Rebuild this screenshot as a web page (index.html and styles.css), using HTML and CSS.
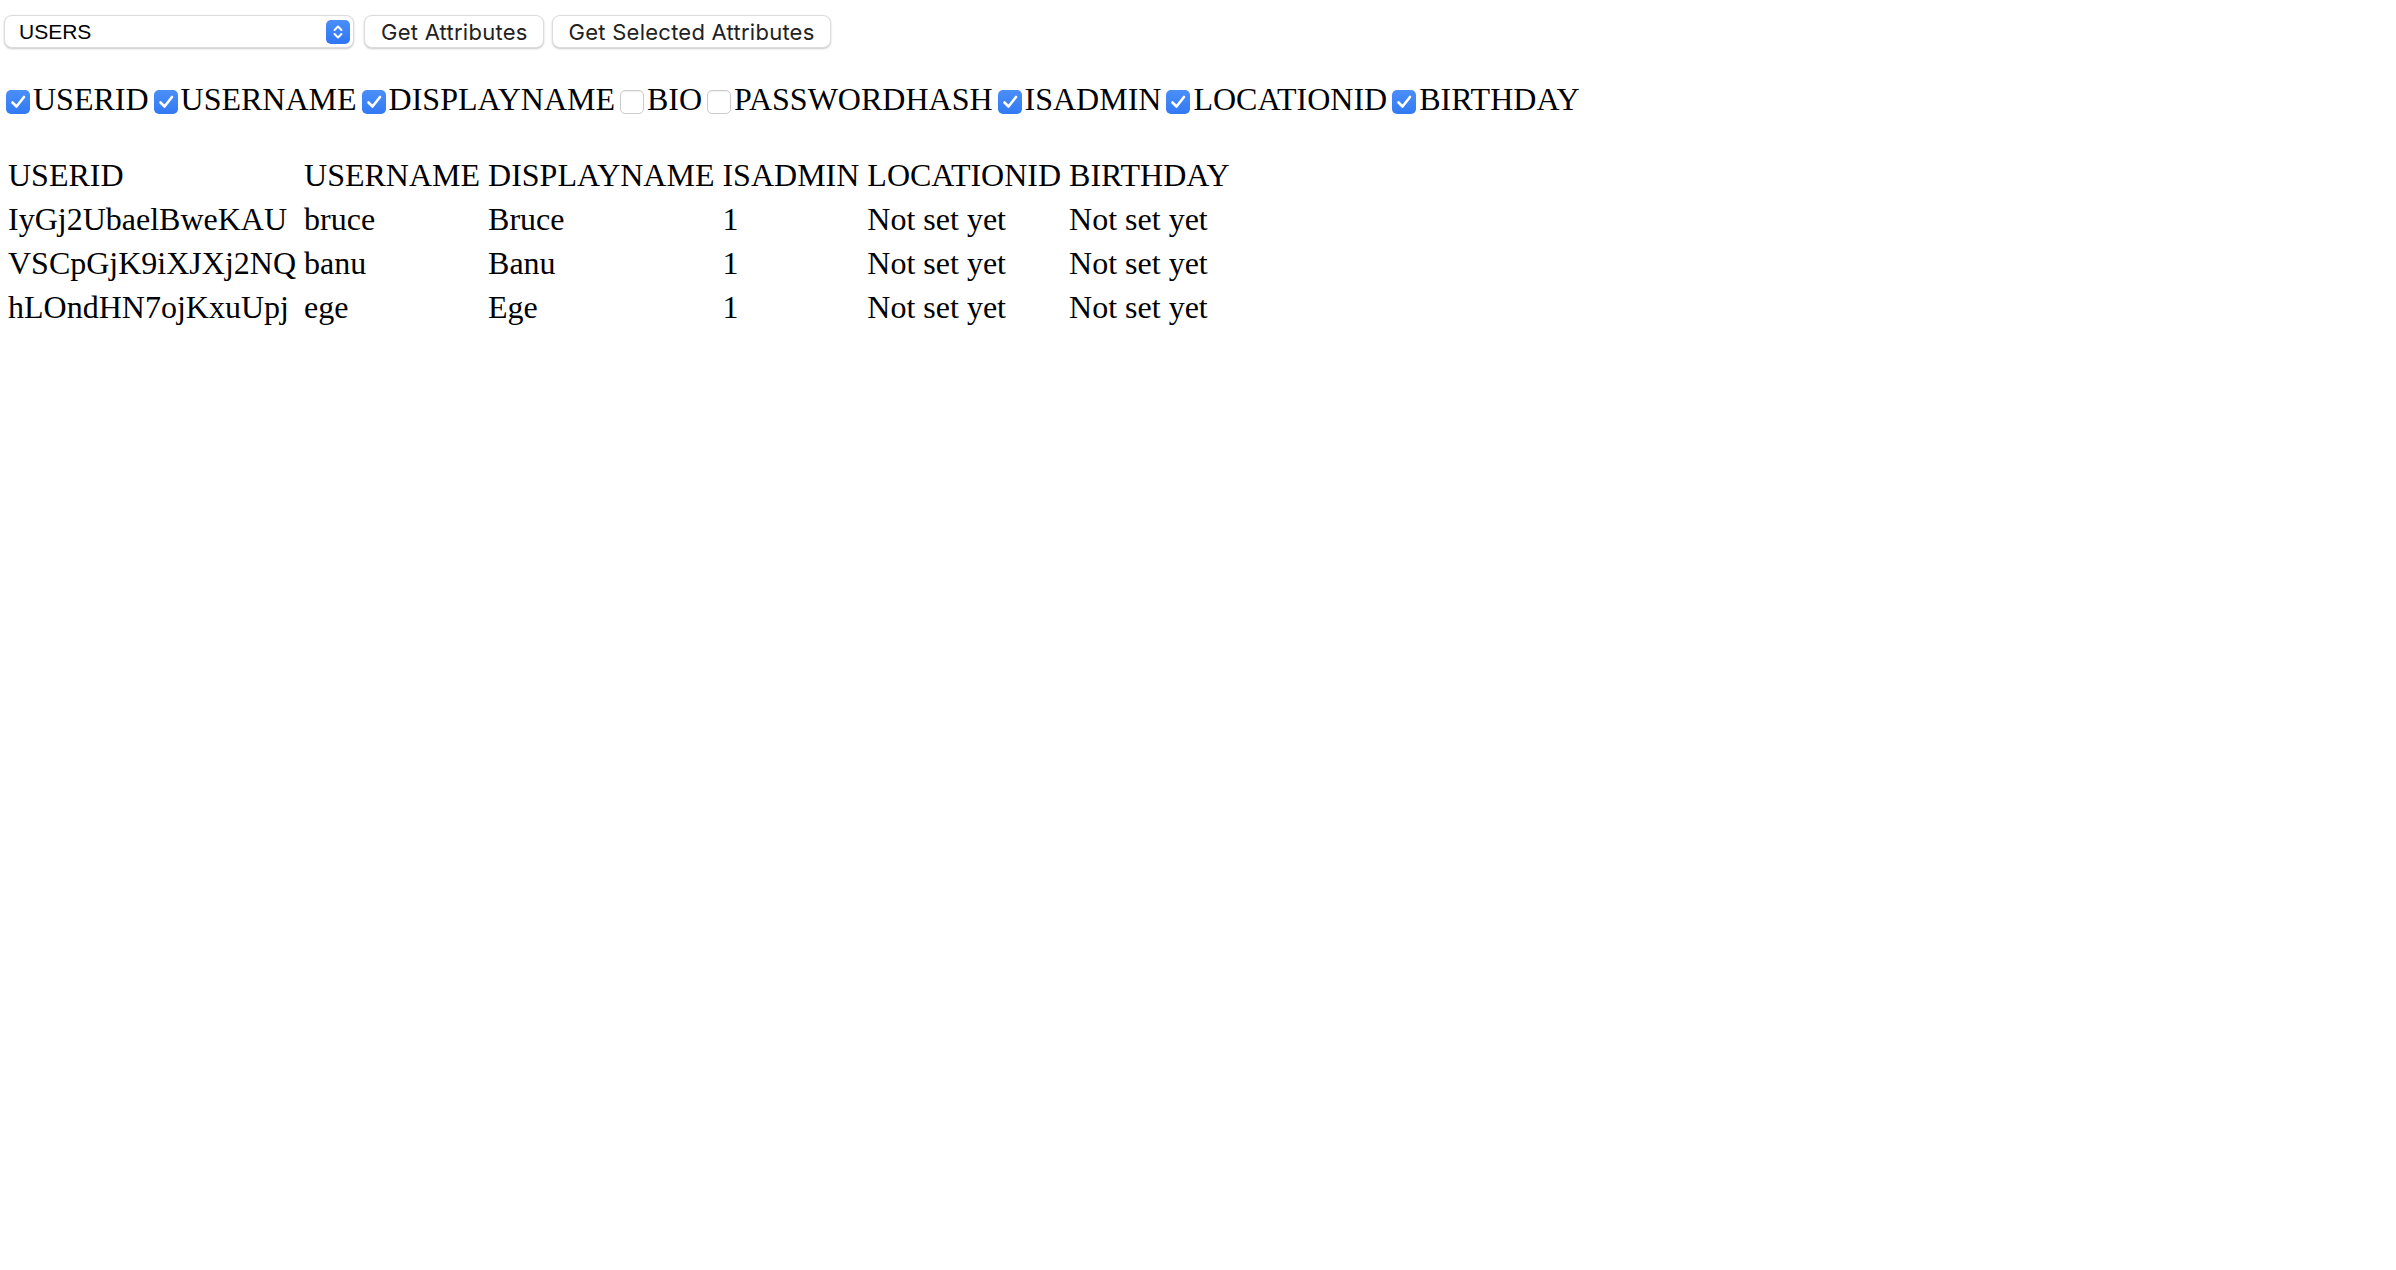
FILE: index.html
```html
<!DOCTYPE html>
<html lang="en">
<head>
<meta charset="utf-8">
<title>Attributes</title>
<link rel="stylesheet" href="styles.css">
</head>
<body>
<div class="toolbar">
  <div class="select">
    <span class="select-value">USERS</span>
    <span class="stepper">
      <svg width="24" height="24" viewBox="0 0 24 24"><path d="M8.5 10 L12 6.5 L15.5 10" fill="none" stroke="#fff" stroke-width="2" stroke-linecap="round" stroke-linejoin="round"/><path d="M8.5 14 L12 17.5 L15.5 14" fill="none" stroke="#fff" stroke-width="2" stroke-linecap="round" stroke-linejoin="round"/></svg>
    </span>
  </div>
  <button class="btn">Get Attributes</button>
  <button class="btn btn-wide">Get Selected Attributes</button>
</div>

<div class="fields">
  <label class="field"><span class="cb on" role="checkbox" aria-checked="true"><svg width="24" height="24" viewBox="0 0 24 24"><path d="M6.5 12.5 L10.5 16.5 L18 7" fill="none" stroke="#fff" stroke-width="2.6" stroke-linecap="round" stroke-linejoin="round"/></svg></span>USERID</label><label class="field"><span class="cb on" role="checkbox" aria-checked="true"><svg width="24" height="24" viewBox="0 0 24 24"><path d="M6.5 12.5 L10.5 16.5 L18 7" fill="none" stroke="#fff" stroke-width="2.6" stroke-linecap="round" stroke-linejoin="round"/></svg></span>USERNAME</label><label class="field"><span class="cb on" role="checkbox" aria-checked="true"><svg width="24" height="24" viewBox="0 0 24 24"><path d="M6.5 12.5 L10.5 16.5 L18 7" fill="none" stroke="#fff" stroke-width="2.6" stroke-linecap="round" stroke-linejoin="round"/></svg></span>DISPLAYNAME</label><label class="field"><span class="cb" role="checkbox" aria-checked="false"></span>BIO</label><label class="field"><span class="cb" role="checkbox" aria-checked="false"></span>PASSWORDHASH</label><label class="field"><span class="cb on" role="checkbox" aria-checked="true"><svg width="24" height="24" viewBox="0 0 24 24"><path d="M6.5 12.5 L10.5 16.5 L18 7" fill="none" stroke="#fff" stroke-width="2.6" stroke-linecap="round" stroke-linejoin="round"/></svg></span>ISADMIN</label><label class="field"><span class="cb on" role="checkbox" aria-checked="true"><svg width="24" height="24" viewBox="0 0 24 24"><path d="M6.5 12.5 L10.5 16.5 L18 7" fill="none" stroke="#fff" stroke-width="2.6" stroke-linecap="round" stroke-linejoin="round"/></svg></span>LOCATIONID</label><label class="field"><span class="cb on" role="checkbox" aria-checked="true"><svg width="24" height="24" viewBox="0 0 24 24"><path d="M6.5 12.5 L10.5 16.5 L18 7" fill="none" stroke="#fff" stroke-width="2.6" stroke-linecap="round" stroke-linejoin="round"/></svg></span>BIRTHDAY</label>
</div>

<table class="data">
  <thead>
    <tr><th>USERID</th><th>USERNAME</th><th>DISPLAYNAME</th><th>ISADMIN</th><th>LOCATIONID</th><th>BIRTHDAY</th></tr>
  </thead>
  <tbody>
    <tr><td>IyGj2UbaelBweKAU</td><td>bruce</td><td>Bruce</td><td>1</td><td>Not set yet</td><td>Not set yet</td></tr>
    <tr><td>VSCpGjK9iXJXj2NQ</td><td>banu</td><td>Banu</td><td>1</td><td>Not set yet</td><td>Not set yet</td></tr>
    <tr><td>hLOndHN7ojKxuUpj</td><td>ege</td><td>Ege</td><td>1</td><td>Not set yet</td><td>Not set yet</td></tr>
  </tbody>
</table>
</body>
</html>
```
FILE: styles.css
```css
html, body {
  margin: 0;
  padding: 0;
  background: #fff;
}

body {
  font-family: "Liberation Serif", "Times New Roman", serif;
  font-size: 32px;
  color: #000;
}

.toolbar {
  display: flex;
  align-items: center;
  padding: 15px 0 0 4px;
}

.select {
  box-sizing: border-box;
  width: 350px;
  height: 33px;
  display: flex;
  align-items: center;
  justify-content: space-between;
  padding: 0 3px 0 14px;
  background: #fff;
  border: 1px solid #dcdcdc;
  border-radius: 8px;
  box-shadow: 0 1px 2px rgba(0, 0, 0, 0.22);
}

.select-value {
  font-family: "Liberation Sans", Arial, sans-serif;
  font-size: 21px;
  color: #000;
}

.stepper {
  width: 24px;
  height: 24px;
  border-radius: 5px;
  background: linear-gradient(#4a8ff8, #2f75f5);
  display: flex;
}

.btn {
  box-sizing: border-box;
  height: 33px;
  margin-left: 10px;
  padding: 0 15px 0 16px;
  font-family: "Inter", "Liberation Sans", sans-serif;
  font-size: 22px;
  letter-spacing: 0.25px;
  color: #222;
  background: #fff;
  border: 1px solid #dcdcdc;
  border-radius: 8px;
  box-shadow: 0 1px 2px rgba(0, 0, 0, 0.22);
  white-space: nowrap;
}

.btn-wide {
  margin-left: 8px;
}

.fields {
  margin-top: 33px;
  padding-left: 6px;
  white-space: nowrap;
}

.field {
  display: inline;
}

.field + .field .cb {
  margin-left: 5px;
}

.cb {
  box-sizing: border-box;
  display: inline-block;
  width: 24px;
  height: 24px;
  margin-right: 3px;
  vertical-align: -4px;
  border-radius: 5px;
  background: #fff;
  border: 1px solid #cbcbcb;
  box-shadow: inset 0 1px 1px rgba(0, 0, 0, 0.06);
}

.cb svg {
  display: block;
}

.cb.on {
  border: none;
  background: linear-gradient(#4a8ff8, #3279f5);
  box-shadow: none;
}

.data {
  margin: 33px 0 0 2px;
  border-spacing: 4px;
}

.data th,
.data td {
  padding: 2px;
  line-height: 36px;
  font-weight: normal;
  text-align: left;
  white-space: nowrap;
}
```
